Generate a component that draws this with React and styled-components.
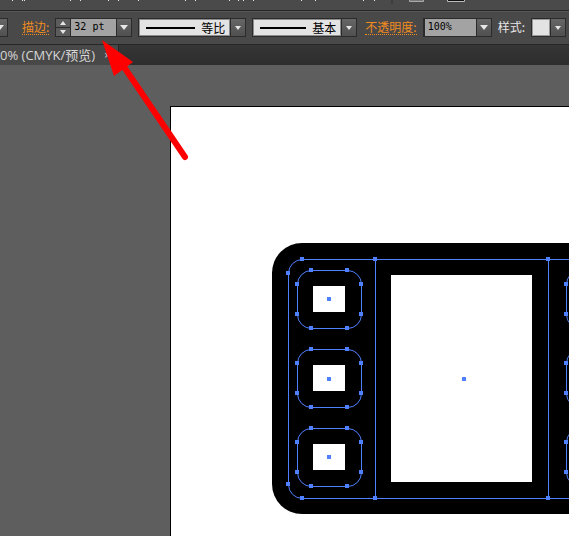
import { useState } from 'react';
import styled, { createGlobalStyle } from 'styled-components';

const GlobalStyle = createGlobalStyle`
  * {
    box-sizing: border-box;
  }
  body {
    margin: 0;
    background: #5e5e5e;
    font-family: "Liberation Sans", "Noto Sans CJK SC", sans-serif;
  }
`
const Page = styled.div`
  min-height: 100vh;
  display: flex;
  flex-direction: column;
  overflow: hidden;
`
const MenuStrip = styled.header`
  height: 11px;
  background: #4a4a4a;
  border-bottom: 1px solid #272727;
  overflow: hidden;

  svg {
    display: block;
  }
`
const OptionsBar = styled.div`
  height: 34px;
  padding-bottom: 1px;
  display: flex;
  align-items: center;
  background: #494949;
  border-top: 1px solid #575757;
  border-bottom: 1px solid #272727;
  overflow: hidden;
`
const Group = styled.div`
  display: flex;
  flex: none;
  height: 19px;
  margin-right: ${({ $gap }) => $gap || 6}px;
  border: 1px solid #2b2b2b;
`
// scrolled halfway out of the bar
const LeadingGroup = styled(Group)`
  margin-left: -9px;
`
const OptionLabel = styled.label`
  flex: none;
  height: 15px;
  margin-right: 6px;
  border-bottom: 1px ${({ $link }) => ($link ? 'dotted #f28c1e' : 'solid transparent')};
  font-family: "Noto Sans CJK SC", sans-serif;
  font-size: 12px;
  line-height: 14px;
  white-space: nowrap;
  color: ${({ $link }) => ($link ? '#f28c1e' : '#e6e6e6')};
`
const ValueInput = styled.input`
  width: ${({ $width }) => $width}px;
  height: 17px;
  padding: 0 3px 2px;
  border: 0;
  border-left: 1px solid #2b2b2b;
  background: #a3a3a3;
  color: #000;
  font-family: "DejaVu Sans Mono", monospace;
  font-size: 10px;
`
const ArrowButton = styled.button`
  width: 15px;
  height: 17px;
  padding: 0;
  display: flex;
  align-items: center;
  justify-content: center;
  border: 0;
  border-left: 1px solid #2b2b2b;
  background: linear-gradient(#666, #505050);
`
const Stepper = styled.div`
  width: 14px;
  display: flex;
  flex-direction: column;
`
const StepButton = styled.button`
  flex: 1;
  padding: 0;
  display: flex;
  align-items: center;
  justify-content: center;
  border: 0;
  background: #5c5c5c;

  & + & {
    border-top: 1px solid #2b2b2b;
  }
`
const StrokeField = styled.button`
  width: ${({ $width }) => $width}px;
  padding: 0 4px 0 6px;
  display: flex;
  align-items: center;
  gap: 6px;
  border: 1px solid #8c8c8c;
  background: #e3e3e3;
  color: #000;
  font-family: "Noto Sans CJK SC", sans-serif;
  font-size: 12px;
  line-height: 14px;
  white-space: nowrap;
`
const StrokeLine = styled.span`
  flex: 1;
  height: 2px;
  background: #000;
`
const Swatch = styled.button`
  width: 18px;
  padding: 0;
  border: 1px solid #999;
  background: #e3e3e3;
`
const TabBar = styled.nav`
  height: 20px;
  display: flex;
  background: linear-gradient(#363636, #2d2d2d);
`
const Tab = styled.div`
  width: 119px;
  display: flex;
  align-items: center;
  justify-content: space-between;
  padding-right: 8px;
  background: #484848;
  border-right: 1px solid #272727;
  color: #d6d6d6;
  font-family: "Open Sans", "Noto Sans CJK SC", sans-serif;
  font-size: 13px;
  line-height: 20px;
  white-space: nowrap;
`
const CloseButton = styled.button`
  padding: 0;
  border: 0;
  background: none;
  color: #ddd;
  font-size: 10px;
`
const Workspace = styled.main`
  flex: 1;
  display: flex;
  padding: 41px 0 0 170px;
  background: #5e5e5e;
  overflow: hidden;
`
const Artboard = styled.section`
  flex: 1;
  min-width: 0;
  padding: 136px 0 0 101px;
  background: #fff;
  border-top: 1px solid #000;
  border-left: 1px solid #000;
  overflow: hidden;

  svg {
    display: block;
  }
`
const Pointer = styled.svg`
  position: absolute;
  top: 38px;
  left: 100px;
  pointer-events: none;
`

const BLUE = '#4f80ff';

function Triangle({ up, small }) {
  return (
    <svg width={small ? 6 : 8} height={small ? 4 : 5} viewBox="0 0 8 5" preserveAspectRatio="none" aria-hidden="true">
      <path d={up ? 'M0 5L4 0L8 5Z' : 'M0 0H8L4 5Z'} fill="#e6e6e6" />
    </svg>
  )
}

function MenuRemnants() {
  const ticks = [12, 22, 24, 70, 80, 108, 118, 138, 185, 195, 229, 238, 243, 253, 301, 315, 363, 374];
  return (
    <svg width="569" height="10" aria-hidden="true">
      {ticks.map((x) => <rect key={x} x={x} width="1" height="1" fill="#e6e6e6" />)}
      <path d="M392 0V4" stroke="#333" />
      <path d="M409.5 0V1.5H423.5V0" fill="#777" stroke="#aaa" />
      <path d="M447.5 0V1.5H464.5V0" fill="#111" stroke="#bbb" />
    </svg>
  )
}

function Anchor({ x, y }) {
  return <rect x={x - 2} y={y - 2} width="4" height="4" fill={BLUE} />
}

function Perforation({ x, y, center = 29 }) {
  const points = [
    [14, 0], [50, 0], [0, 14], [64, 14],
    [0, 44], [64, 44], [14, 58], [50, 58],
  ];
  return (
    <g transform={`translate(${x} ${y})`}>
      <rect x="16" y="16" width="32" height="26" fill="#fff" />
      <rect x="0.5" y="0.5" width="64" height="58" rx="14" fill="none" stroke={BLUE} />
      {points.map(([px, py]) => <Anchor key={`${px}-${py}`} x={px} y={py} />)}
      <Anchor x={32} y={center} />
    </g>
  )
}

function FilmFrame() {
  const corners = [
    [30, 16], [16, 30], [16, 241], [30, 255],
    [103, 16], [103, 255], [276, 16], [276, 255],
  ];
  return (
    <svg width="380" height="271" viewBox="0 0 380 271" role="img" aria-label="Film frame">
      <rect width="380" height="271" rx="30" />
      <rect x="119" y="32" width="141" height="207" fill="#fff" />
      <g fill="none" stroke={BLUE}>
        <rect x="16.5" y="16.5" width="347" height="239" rx="14" />
        <path d="M103.5 16V255M276.5 16V255" />
      </g>
      {corners.map(([x, y]) => <Anchor key={`${x}-${y}`} x={x} y={y} />)}
      <Anchor x={192} y={136} />
      {[25, 294].map((x) => (
        <g key={x}>
          <Perforation x={x} y={27} />
          <Perforation x={x} y={106} center={30} />
          <Perforation x={x} y={185} />
        </g>
      ))}
    </svg>
  )
}

function App() {

  const [weight, setWeight] = useState(32);
  const [opacity, setOpacity] = useState('100%');

  return (
    <Page>
      <GlobalStyle />
      <MenuStrip><MenuRemnants /></MenuStrip>

      <OptionsBar>
        <LeadingGroup $gap={14}>
          <ArrowButton aria-label="More"><Triangle /></ArrowButton>
        </LeadingGroup>
        <OptionLabel $link htmlFor="weight">描边:</OptionLabel>
        <Group>
          <Stepper>
            <StepButton aria-label="Increase" onClick={() => setWeight((prev) => prev + 1)}><Triangle up small /></StepButton>
            <StepButton aria-label="Decrease" onClick={() => setWeight((prev) => Math.max(0, prev - 1))}><Triangle small /></StepButton>
          </Stepper>
          <ValueInput id="weight" $width={46} value={`${weight} pt`} onChange={(e) => setWeight(parseInt(e.target.value) || 0)} />
          <ArrowButton aria-label="Stroke weights"><Triangle /></ArrowButton>
        </Group>
        <Group>
          <StrokeField $width={91}><StrokeLine />等比</StrokeField>
          <ArrowButton aria-label="Width profiles"><Triangle small /></ArrowButton>
        </Group>
        <Group $gap={8}>
          <StrokeField $width={88}><StrokeLine />基本</StrokeField>
          <ArrowButton aria-label="Brushes"><Triangle small /></ArrowButton>
        </Group>
        <OptionLabel $link htmlFor="opacity">不透明度:</OptionLabel>
        <Group>
          <ValueInput id="opacity" $width={52} value={opacity} onChange={(e) => setOpacity(e.target.value)} />
          <ArrowButton aria-label="Opacity values"><Triangle /></ArrowButton>
        </Group>
        <OptionLabel htmlFor="style">样式:</OptionLabel>
        <Group>
          <Swatch id="style" />
          <ArrowButton aria-label="Styles"><Triangle small /></ArrowButton>
        </Group>
      </OptionsBar>

      <TabBar>
        <Tab>
          <span>0% (CMYK/预览)</span>
          <CloseButton aria-label="Close">×</CloseButton>
        </Tab>
      </TabBar>

      <Workspace>
        <Artboard><FilmFrame /></Artboard>
      </Workspace>

      <Pointer width="90" height="124" aria-hidden="true">
        <path d="M22 26L85 119" stroke="#f00" strokeWidth="6" strokeLinecap="round" />
        <path d="M2 2L33 24L14 38Z" fill="#f00" />
      </Pointer>
    </Page>
  )
}

export default App
